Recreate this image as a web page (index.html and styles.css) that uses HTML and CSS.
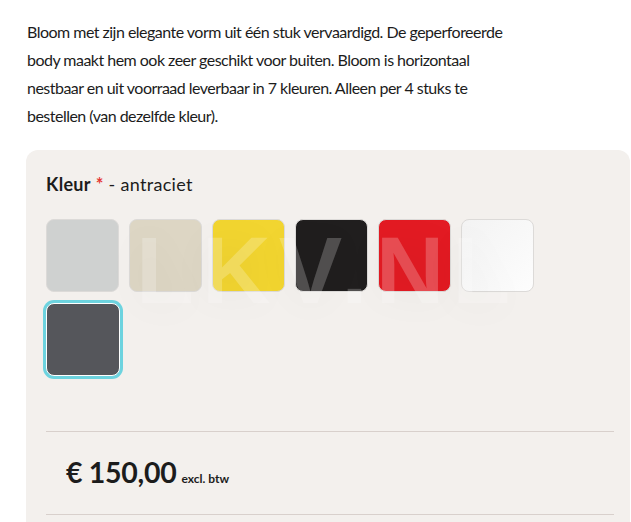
FILE: index.html
```html
<!DOCTYPE html>
<html lang="nl">
<head>
<meta charset="utf-8">
<link rel="stylesheet" href="styles.css">
</head>
<body>
<div class="page">
  <p class="intro">Bloom met zijn elegante vorm uit één stuk vervaardigd. De geperforeerde body maakt hem ook zeer geschikt voor buiten. Bloom is horizontaal nestbaar en uit voorraad leverbaar in 7 kleuren. Alleen per 4 stuks te bestellen (van dezelfde kleur).</p>
  <div class="card">
    <div class="label"><strong>Kleur</strong> <span class="req">*</span> - antraciet</div>
    <div class="swatches">
      <span class="swatch grey"></span>
      <span class="swatch beige"></span>
      <span class="swatch yellow"></span>
      <span class="swatch black"></span>
      <span class="swatch red"></span>
      <span class="swatch white"></span>
      <span class="swatch anthracite selected"></span>
      <div class="watermark">LKV.NL</div>
    </div>
    <div class="price-row">
      <span class="price">€ 150,00</span><span class="tax">excl. btw</span>
    </div>
  </div>
</div>
</body>
</html>
```
FILE: styles.css
```css
html, body {
  margin: 0;
  padding: 0;
  overflow: hidden;
  background: #ffffff;
}
body {
  font-family: "Lato", "Liberation Sans", sans-serif;
  color: #1c1c1c;
}
.page {
  padding: 18px 0 0 27px;
  width: 604px;
}
.intro {
  margin: 0 0 20px 0;
  font-size: 16px;
  line-height: 28px;
  letter-spacing: -0.52px;
  width: 500px;
}
.card {
  background: #f3f0ed;
  border-radius: 12px;
  padding: 22px 16px 0 20px;
  width: 568px;
  height: 400px;
  margin-left: -1px;
}
.label {
  font-size: 18px;
  line-height: 24px;
  letter-spacing: 0.3px;
}
.label strong { font-weight: 700; }
.req { color: #e53935; font-weight: 700; }
.swatches {
  position: relative;
  display: flex;
  flex-wrap: wrap;
  gap: 10px 10px;
  margin-top: 23px;
  padding-bottom: 55px;
  border-bottom: 1px solid #d8d0cc;
}
.swatch {
  width: 73px;
  height: 73px;
  box-sizing: border-box;
  border: 1px solid #dcdad8;
  border-radius: 8px;
}
.grey { background: #cfd1d0; }
.beige { background: #ddd6c4; }
.yellow { background: #f2d530; }
.black { background: #201e1e; }
.red { background: #e31b23; }
.white { background: linear-gradient(135deg, #f3f3f3, #fdfdfd); }
.anthracite { background: #55565b; }
.selected {
  border: 1px solid #ffffff;
  box-shadow: 0 0 0 3px #6dd3df;
  width: 74px;
  height: 73px;
  margin-top: 1px;
}
.watermark {
  position: absolute;
  left: 90px;
  top: 4px;
  font-family: "Liberation Sans", sans-serif;
  font-weight: 700;
  font-size: 95px;
  line-height: 95px;
  letter-spacing: 8px;
  color: rgba(255, 255, 255, 0.22);
  text-shadow: 0 0 40px rgba(0, 0, 0, 0.05);
  pointer-events: none;
}
.price-row {
  display: flex;
  align-items: baseline;
  padding: 23px 0 0 20px;
  height: 59px;
  border-bottom: 1px solid #d8d0cc;
}
.price {
  font-size: 28.5px;
  font-weight: 700;
  letter-spacing: -0.3px;
}
.tax {
  font-size: 12px;
  font-weight: 700;
  margin-left: 5px;
}
```
